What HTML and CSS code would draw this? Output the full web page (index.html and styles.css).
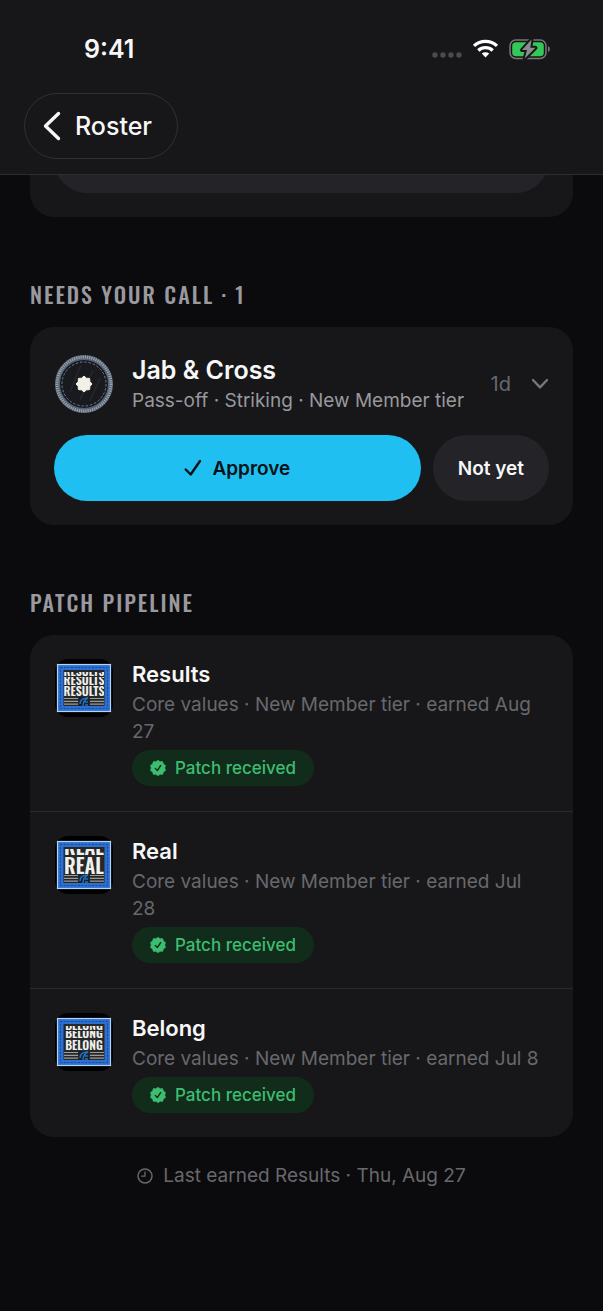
FILE: index.html
```html
<!DOCTYPE html>
<html lang="en">
<head>
<meta charset="utf-8">
<meta name="viewport" content="width=device-width, initial-scale=1">
<title>Roster</title>
<link rel="stylesheet" href="styles.css">
</head>
<body>
<svg class="defs" aria-hidden="true">
  <symbol id="seal" viewBox="0 0 16 16">
    <path d="M8 0.3 10.1 1.7 12.6 1.6 13.4 4 15.5 5.4 14.8 8 15.5 10.5 13.4 12 12.6 14.4 10.1 14.3 8 15.7 5.9 14.3 3.4 14.4 2.6 12 .5 10.5 1.2 8 .5 5.4 2.6 4 3.4 1.6 5.9 1.7Z" fill="#3dbd70" stroke="#3dbd70" stroke-width=".6" stroke-linejoin="round"/>
    <path d="M5.300 8.400 7.300 10.600 10.700 5.500" fill="none" stroke="#122c1b" stroke-width="1.400" stroke-linecap="round" stroke-linejoin="round"/>
  </symbol>
  <symbol id="patch-base" viewBox="0 0 58 58">
    <rect width="58" height="58" rx="13" fill="#000"/>
    <rect x="2.5" y="5.5" width="53" height="47" fill="#2c6fd0" stroke="#b5d3f5" stroke-width="1.2"/>
    <rect x="5.5" y="8.5" width="47" height="41" fill="none" stroke="#174b9b" stroke-width="1" stroke-dasharray="2 1.5"/>
    <rect x="8.500" y="11" width="41" height="36" fill="#252729"/>
    <path d="M9 39.500H23M9 42.300H23M9 45.100H23M35 39.500H49M35 42.300H49M35 45.100H49" stroke="#9b9c98" stroke-width="1.2"/>
    <rect x="24" y="38" width="10" height="9" fill="#14222f"/>
    <path d="M25 45C25 41 28 39 33 39C29 41 28 43 28 47M30 43H33M30 46H33" fill="none" stroke="#246ebd" stroke-width="1.5"/>
  </symbol>
</svg>

<header class="top">
  <div class="status">
    <time>9:41</time>
    <svg class="status-icons" viewBox="0 0 118 18" role="img" aria-label="Wi-Fi on, battery charging">
      <g fill="#4b4b4d"><circle cx="3" cy="15" r="2.700"/><circle cx="11" cy="15" r="2.700"/><circle cx="19" cy="15" r="2.700"/><circle cx="27" cy="15" r="2.700"/></g>
      <g fill="none" stroke="#fff" stroke-width="3.300"><path d="M42 5.900A17 17 0 0 1 65 5.900"/><path d="M46.300 10.500A10.500 10.500 0 0 1 60.700 10.500"/></g>
      <path d="M49.800 13.600A5.400 5.400 0 0 1 57.200 13.600L53.500 17.600Z" fill="#fff"/>
      <rect x="78" y="0" width="36" height="18.500" rx="5.800" fill="none" stroke="#77777a" stroke-width="1.500"/>
      <rect x="80.200" y="2.300" width="31.600" height="13.900" rx="3.800" fill="#34c759"/>
      <path d="M116 6.200C118.500 7 118.500 11 116 11.800Z" fill="#77777a"/>
      <path d="M99.500-.5 90 10H95L92.700 18.500 103.500 7.800H98.300Z" fill="#8c8c90" stroke="#171719" stroke-width="4" stroke-linejoin="round" paint-order="stroke"/>
    </svg>
  </div>
  <button class="back" type="button">
    <svg viewBox="0 0 18 30" aria-hidden="true"><path d="M15.500 2.500 2.500 15 15.500 27.500" fill="none" stroke="#f5f5f7" stroke-width="3.400" stroke-linecap="round" stroke-linejoin="round"/></svg>
    <span>Roster</span>
  </button>
</header>

<main>
  <div class="card scrolled"><div class="field"></div></div>

  <h2>Needs your call · 1</h2>
  <section class="card request">
    <div class="summary">
      <svg class="badge" viewBox="0 0 58 58" aria-hidden="true">
        <circle cx="29" cy="29" r="26.500" fill="#181a20" stroke="#586371" stroke-width="5"/>
        <circle cx="29" cy="29" r="27" fill="none" stroke="#94a2b1" stroke-width="3" stroke-dasharray="1.200 1"/>
        <path d="M15 37 26 10M25 45 38 15M35 46 45 23" stroke="#29262a" stroke-width="1.500"/>
        <circle cx="29" cy="29" r="22" fill="none" stroke="#77818e" stroke-width=".9" stroke-dasharray="2.600 1.700"/>
        <path d="M29 21 31.400 23.200 34.600 23.400 34.900 26.600 37 29 34.900 31.400 34.600 34.600 31.400 34.900 29 37 26.600 34.900 23.400 34.600 23.200 31.400 21 29 23.200 26.600 23.400 23.400 26.600 23.200Z" fill="#f3f1e6" stroke="#f3f1e6" stroke-linejoin="round"/>
      </svg>
      <div class="text">
        <h3 class="large">Jab &amp; Cross</h3>
        <p class="bright">Pass-off · Striking · New Member tier</p>
      </div>
      <span class="age">1d</span>
      <button class="expand" type="button" aria-label="Show details"><svg viewBox="0 0 18 12" aria-hidden="true"><path d="M2 2 9 9.300 16 2" fill="none" stroke="#77777b" stroke-width="2.400" stroke-linecap="round" stroke-linejoin="round"/></svg></button>
    </div>
    <div class="actions">
      <button class="approve" type="button"><svg viewBox="0 0 18 18" aria-hidden="true"><path d="M1.700 10.500 6.700 15.500 16 2" fill="none" stroke="#071216" stroke-width="2.400" stroke-linecap="round" stroke-linejoin="round"/></svg>Approve</button>
      <button class="later" type="button">Not yet</button>
    </div>
  </section>

  <h2>Patch pipeline</h2>
  <ul class="card pipeline">
    <li>
      <svg class="patch" viewBox="0 0 58 58" aria-hidden="true"><use href="#patch-base"/>
        <g class="stitch">
          <svg x="9" y="13" width="40" height="4"><text x="20" y="4">RESULTS</text></svg>
          <svg x="9" y="18" width="40" height="8"><text x="20" y="7.500">RESULTS</text></svg>
          <svg x="9" y="26" width="40" height="12"><text x="20" y="11">RESULTS</text></svg>
        </g>
      </svg>
      <div class="text">
        <h3>Results</h3>
        <p>Core values · New Member tier · earned Aug 27</p>
        <span class="chip"><svg aria-hidden="true"><use href="#seal"/></svg>Patch received</span>
      </div>
    </li>
    <li>
      <svg class="patch" viewBox="0 0 58 58" aria-hidden="true"><use href="#patch-base"/>
        <g class="stitch tall">
          <svg x="9" y="13" width="40" height="7"><text x="20" y="6">REAL</text></svg>
          <svg x="9" y="20" width="40" height="18"><text x="20" y="17.500">REAL</text></svg>
        </g>
      </svg>
      <div class="text">
        <h3>Real</h3>
        <p>Core values · New Member tier · earned Jul 28</p>
        <span class="chip"><svg aria-hidden="true"><use href="#seal"/></svg>Patch received</span>
      </div>
    </li>
    <li>
      <svg class="patch" viewBox="0 0 58 58" aria-hidden="true"><use href="#patch-base"/>
        <g class="stitch">
          <svg x="9" y="13" width="40" height="4"><text x="20" y="4">BELONG</text></svg>
          <svg x="9" y="18" width="40" height="8"><text x="20" y="7">BELONG</text></svg>
          <svg x="9" y="26" width="40" height="12"><text x="20" y="11">BELONG</text></svg>
        </g>
      </svg>
      <div class="text">
        <h3>Belong</h3>
        <p>Core values · New Member tier · earned Jul 8</p>
        <span class="chip"><svg aria-hidden="true"><use href="#seal"/></svg>Patch received</span>
      </div>
    </li>
  </ul>
  <p class="last">
    <svg viewBox="0 0 16 16" aria-hidden="true"><circle cx="8" cy="8" r="7" fill="none" stroke="#68686c" stroke-width="1.500"/><path d="M8 3.800V8.200H4.700" fill="none" stroke="#68686c" stroke-width="1.300" stroke-linecap="round" stroke-linejoin="round"/></svg>
    Last earned Results · Thu, Aug 27
  </p>
</main>
</body>
</html>
```
FILE: styles.css
```css
* { box-sizing: border-box; }
body {
  margin: 0;
  min-height: 100vh;
  background: #0b0b0d;
  color: #f7f7f8;
  font-family: Inter, "Liberation Sans", sans-serif;
}
h2, h3, p, ul { margin: 0; padding: 0; }
button { font: inherit; color: inherit; border: 0; padding: 0; background: none; }
svg { display: block; flex: none; }
.defs { position: absolute; width: 0; height: 0; }

.top {
  background: #171719;
  border-bottom: 1px solid #2d2d30;
  padding: 32px 24px 15px;
}
.status {
  display: flex;
  justify-content: space-between;
  align-items: center;
  height: 34px;
  margin-bottom: 27px;
  padding: 0 29px 0 60px;
  font-size: 25px;
  font-weight: 600;
}
.status-icons { width: 118px; height: 18px; overflow: visible; }
.back {
  display: flex;
  align-items: center;
  gap: 14px;
  height: 66px;
  padding: 0 25px 0 18px;
  border: 1px solid #303033;
  border-radius: 33px;
  font-size: 25px;
  font-weight: 500;
}
.back svg { width: 18px; height: 30px; }

main { padding: 0 30px 40px; }
.card { background: #171719; border-radius: 24px; }
.scrolled {
  overflow: hidden;
  padding: 0 24px 24px;
  border-radius: 0 0 24px 24px;
}
.field { height: 66px; margin-top: -48px; border-radius: 33px; background: #242428; }

h2 {
  margin: 61px 0 17px;
  color: #99999f;
  font-family: Oswald, "Roboto Condensed", "Liberation Sans Narrow", sans-serif;
  font-size: 22px;
  line-height: 32px;
  font-weight: 500;
  letter-spacing: 2px;
  text-transform: uppercase;
}
.text { flex: 1; min-width: 0; }
h3 { font-size: 22px; line-height: 31px; font-weight: 600; }
h3.large { font-size: 25px; }
.text p { margin-top: 1px; font-size: 19px; line-height: 27px; color: #68686c; }
.text p.bright { color: #98989d; white-space: nowrap; }

.request { padding: 24px; }
.summary { display: flex; align-items: center; height: 66px; margin-bottom: 18px; }
.badge, .patch { width: 60px; height: 58px; margin-right: 18px; }
.age { margin: 0 20px; font-size: 20px; color: #68686c; }
.expand svg { width: 18px; height: 12px; }
.actions { display: flex; gap: 12px; font-size: 19px; font-weight: 600; }
.actions button { height: 66px; border-radius: 33px; }
.approve {
  flex: 1;
  display: flex;
  justify-content: center;
  align-items: center;
  gap: 10px;
  background: #1fc0f1;
  color: #071216;
}
.approve svg { width: 18px; height: 18px; }
.actions .later { padding: 0 25px; background: #242428; }

.pipeline { list-style: none; }
.pipeline li { display: flex; padding: 24px 24px 25px; border-bottom: 1px solid #2a2a2d; }
.pipeline li:last-child { border: 0; padding-bottom: 24px; }
.stitch {
  fill: #f0f0ed;
  font-family: Oswald, "Roboto Condensed", "Liberation Sans Narrow", sans-serif;
  font-size: 12px;
  font-weight: 600;
  text-anchor: middle;
}
.stitch.tall { font-size: 20px; }
.stitch svg { overflow: hidden; }
.chip {
  display: inline-flex;
  align-items: center;
  gap: 9px;
  height: 36px;
  margin-top: 5px;
  padding: 0 18px;
  border-radius: 18px;
  background: #122c1b;
  color: #3dbd70;
  font-size: 17px;
  font-weight: 500;
  vertical-align: top;
}
.chip svg { width: 16px; height: 16px; }
.last {
  display: flex;
  justify-content: center;
  align-items: center;
  gap: 10px;
  margin-top: 25px;
  font-size: 19px;
  line-height: 27px;
  color: #68686c;
}
.last svg { width: 16px; height: 16px; }
```
